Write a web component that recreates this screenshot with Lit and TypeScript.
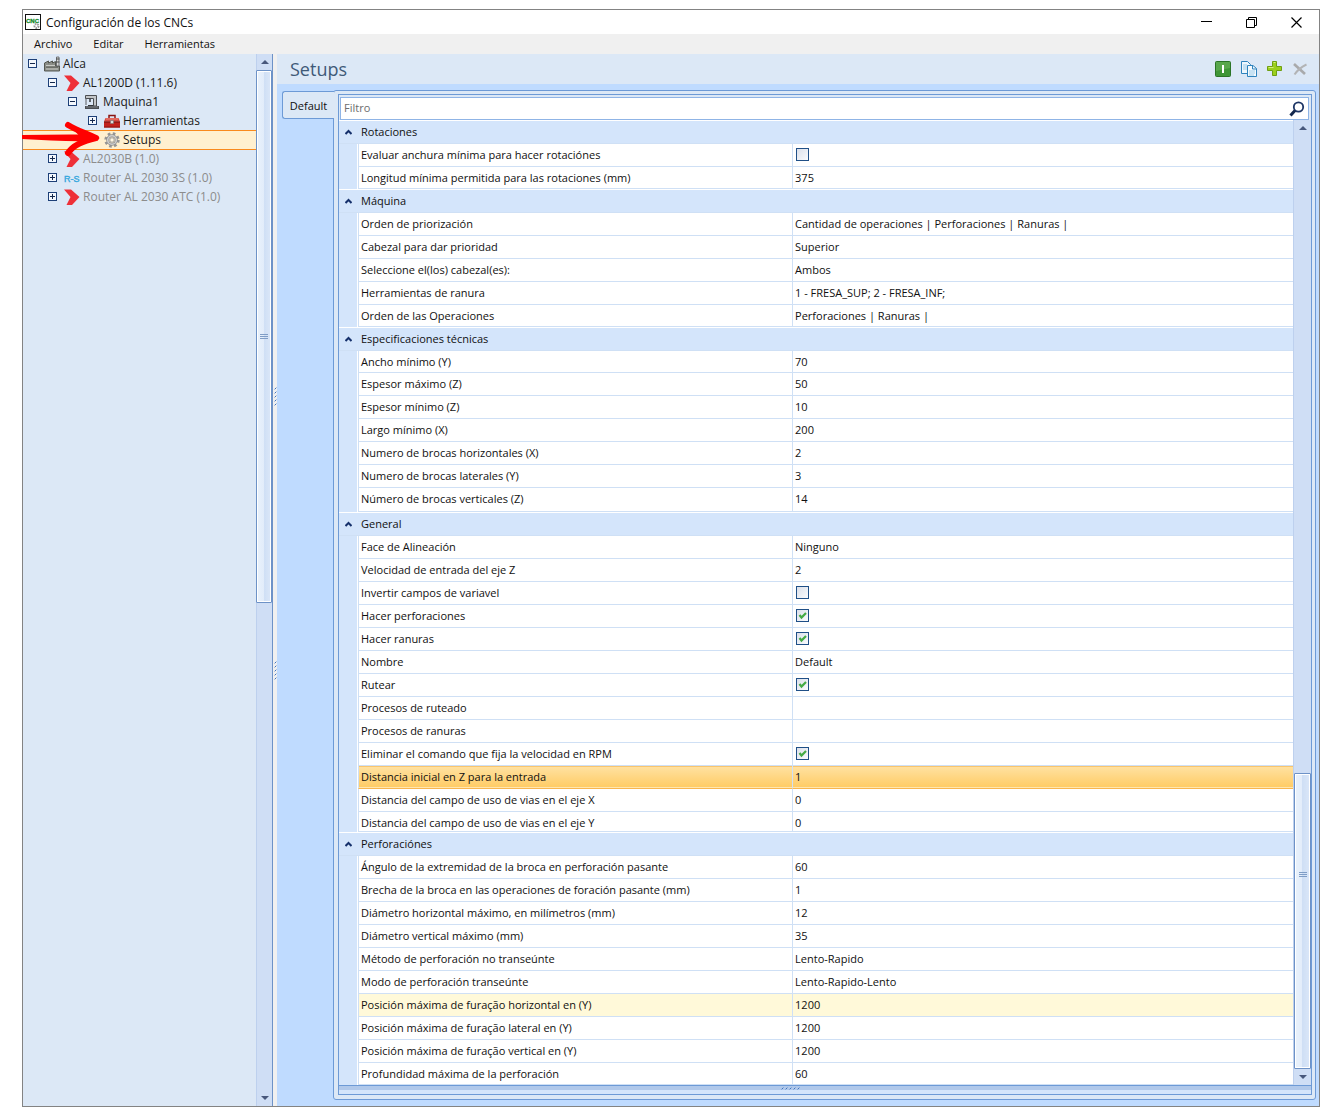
import { LitElement, html, css, svg, nothing } from "lit";
import { customElement, property } from "lit/decorators.js";
import { classMap } from "lit/directives/class-map.js";
import { styleMap } from "lit/directives/style-map.js";

type Row = { name: string; value?: string; check?: boolean; kind?: string };
type Group = { title: string; rows: Row[] };

const GROUPS: Group[] = [
  {
    title: "Rotaciones",
    rows: [
      { name: "Evaluar anchura mínima para hacer rotaciónes", check: false },
      { name: "Longitud mínima permitida para las rotaciones (mm)", value: "375", kind: "snug" },
    ],
  },
  {
    title: "Máquina",
    rows: [
      { name: "Orden de priorización", value: "Cantidad de operaciones | Perforaciones | Ranuras |" },
      { name: "Cabezal para dar prioridad", value: "Superior" },
      { name: "Seleccione el(los) cabezal(es):", value: "Ambos" },
      { name: "Herramientas de ranura", value: "1 - FRESA_SUP; 2 - FRESA_INF;" },
      { name: "Orden de las Operaciones", value: "Perforaciones | Ranuras |", kind: "snug" },
    ],
  },
  {
    title: "Especificaciones técnicas",
    rows: [
      { name: "Ancho mínimo (Y)", value: "70", kind: "snug" },
      { name: "Espesor máximo (Z)", value: "50" },
      { name: "Espesor mínimo (Z)", value: "10" },
      { name: "Largo mínimo (X)", value: "200" },
      { name: "Numero de brocas horizontales (X)", value: "2" },
      { name: "Numero de brocas laterales (Y)", value: "3" },
      { name: "Número de brocas verticales (Z)", value: "14", kind: "tall" },
    ],
  },
  {
    title: "General",
    rows: [
      { name: "Face de Alineación", value: "Ninguno" },
      { name: "Velocidad de entrada del eje Z", value: "2" },
      { name: "Invertir campos de variavel", check: false },
      { name: "Hacer perforaciones", check: true },
      { name: "Hacer ranuras", check: true },
      { name: "Nombre", value: "Default" },
      { name: "Rutear", check: true },
      { name: "Procesos de ruteado", value: "" },
      { name: "Procesos de ranuras", value: "" },
      { name: "Eliminar el comando que fija la velocidad en RPM", check: true },
      { name: "Distancia inicial en Z para la entrada", value: "1", kind: "active" },
      { name: "Distancia del campo de uso de vias en el eje X", value: "0" },
      { name: "Distancia del campo de uso de vias en el eje Y", value: "0", kind: "short" },
    ],
  },
  {
    title: "Perforaciónes",
    rows: [
      { name: "Ángulo de la extremidad de la broca en perforación pasante", value: "60" },
      { name: "Brecha de la broca en las operaciones de foración pasante (mm)", value: "1" },
      { name: "Diámetro horizontal máximo, en milímetros (mm)", value: "12" },
      { name: "Diámetro vertical máximo (mm)", value: "35" },
      { name: "Método de perforación no transeúnte", value: "Lento-Rapido" },
      { name: "Modo de perforación transeúnte", value: "Lento-Rapido-Lento" },
      { name: "Posición máxima de furação horizontal en (Y)", value: "1200", kind: "hover" },
      { name: "Posición máxima de furação lateral en (Y)", value: "1200" },
      { name: "Posición máxima de furação vertical en (Y)", value: "1200" },
      { name: "Profundidad máxima de la perforación", value: "60", kind: "snug" },
    ],
  },
];

type Node = { label: string; level: number; icon: string; open?: boolean; dim?: boolean; selected?: boolean };

const TREE: Node[] = [
  { label: "Alca", level: 0, icon: "factory", open: true },
  { label: "AL1200D (1.11.6)", level: 1, icon: "chevron", open: true },
  { label: "Maquina1", level: 2, icon: "machine", open: true },
  { label: "Herramientas", level: 3, icon: "toolbox", open: false },
  { label: "Setups", level: 3, icon: "gear", selected: true },
  { label: "AL2030B (1.0)", level: 1, icon: "chevron", open: false, dim: true },
  { label: "Router AL 2030 3S (1.0)", level: 1, icon: "rs", open: false, dim: true },
  { label: "Router AL 2030 ATC (1.0)", level: 1, icon: "chevron", open: false, dim: true },
];

const TREE_ICONS: Record<string, unknown> = {
  factory: svg`<path d="M.5 15V7l4-2v2l4-2v2l3-1.500V10H15.500v5z" fill="#8b8e88" stroke="#555852"/>
    <path d="M2 9.500h9M2 13h12" stroke="#c8cac5"/><path d="M2 11.200h12" stroke="#5f625c"/>
    <path d="M12.500 10V1h2.500v9z" fill="#d9dad7" stroke="#55585a" stroke-width=".8"/><path d="M12 3h3.500M12 6h3.500" stroke="#4a4d4c"/>`,
  chevron: svg`<path d="M0 .5H7L15.500 8 8 16H2.500L6.500 8z" fill="#ee3038"/>`,
  machine: svg`<path d="M1.500 1.500h11V12H9.500V4.500h-8z" fill="#c3c6c8" stroke="#4b4e52"/><path d="M2 4v7" stroke="#5a5d60" stroke-width="1"/>
    <path d="M6 4.500v3.500" stroke="#3a3d40" stroke-width="1.500"/><path d="M1 12h14v3H1z" fill="#4a4e53"/><path d="M4 11.500h5" stroke="#33373b"/><path d="M2 13h12" stroke="#9a9ea2" stroke-width=".7"/>`,
  toolbox: svg`<path d="M5 5V2.500h6V5" fill="none" stroke="#8a1512" stroke-width="1.500"/><path d="M1.500 5h13L16 8.500H0z" fill="#d94a40"/>
    <path d="M0 8.500h16v6H0z" fill="#c3221d"/><path d="M2 6h12" stroke="#eb8a7e"/><path d="M0 9h16" stroke="#74100d"/><path d="M0 14h16" stroke="#8e1512"/>
    <path d="M6.500 7.500h3v3h-3z" fill="#dedede" stroke="#777" stroke-width=".6"/>`,
  gear: svg`<circle cx="8" cy="8" r="6.400" fill="none" stroke="#959595" stroke-width="2.600" stroke-dasharray="2.600 2.427"/>
    <circle cx="8" cy="8" r="4.300" fill="none" stroke="#8d8d8d" stroke-width="3"/><circle cx="8" cy="8" r="4.300" fill="none" stroke="#cfcfcf" stroke-width="1.600"/>
    <circle cx="8" cy="8" r="2.200" fill="#fff6e2" stroke="#909090" stroke-width=".8"/>`,
  rs: svg`<text x="0" y="12" font-size="9" font-family="Liberation Sans, sans-serif" fill="#35a7dd" stroke="#35a7dd" stroke-width=".4">R-S</text>`,
};

const icon = (body: unknown) =>
  html`<svg width="16" height="16" viewBox="0 0 16 16" aria-hidden="true">${body}</svg>`;

@customElement("pane-scrollbar")
class PaneScrollbar extends LitElement {
  @property({ type: Number }) before = 0;
  @property({ type: Number }) thumb = 1;
  @property({ type: Number }) after = 0;
  @property({ type: Number }) grip = 50;

  static styles = css`
    :host { display: flex; flex-direction: column; width: 16px; flex: none; box-sizing: border-box;
      background: #cfdef5; border-left: 1px solid #bdd0ee; }
    :host([inset]) { width: 18px; }
    .arrow { height: 16px; flex: none; border: 0; padding: 0; background: none; display: grid; place-items: center; }
    .track { flex: 1; min-height: 0; display: flex; flex-direction: column; }
    .part { flex: 0 1 0px; min-height: 0; overflow: hidden; }
    .thumb { box-sizing: border-box; border: 1px solid #6d92c7; border-radius: 1px; margin-left: -1px;
      box-shadow: inset 0 0 0 1px #fff; display: flex; flex-direction: column; align-items: center;
      background: linear-gradient(90deg, #e9f2fc, #e2ecfa 50%, #cfdff5 50%, #dbe7f8); }
    :host([inset]) .thumb { margin-left: 0; }
    svg { display: block; flex: none; }
  `;

  render() {
    const grow = (n: number) => styleMap({ flexGrow: String(n) });
    return html`
      <button class="arrow" aria-label="Subir"><svg width="8" height="4"><path d="M0 4l4-4 4 4z" fill="#48587c"/></svg></button>
      <div class="track">
        <div class="part" style=${grow(this.before)}></div>
        <div class="part thumb" style=${grow(this.thumb)}>
          <div class="part" style=${grow(this.grip)}></div>
          <svg width="8" height="5"><path d="M0 .5h8M0 2.500h8M0 4.500h8" stroke="#7f9dc6"/></svg>
          <div class="part" style=${grow(100 - this.grip)}></div>
        </div>
        <div class="part" style=${grow(this.after)}></div>
      </div>
      <button class="arrow" aria-label="Bajar"><svg width="8" height="4"><path d="M0 0l4 4 4-4z" fill="#48587c"/></svg></button>
    `;
  }
}

@customElement("machine-tree")
class MachineTree extends LitElement {
  static styles = css`
    :host { display: block; flex: 1; min-width: 0; }
    .list { list-style: none; margin: 0; padding: 0; }
    .node { display: flex; align-items: center; height: 19px; box-sizing: border-box; padding-left: 5px;
      font-size: 12px; line-height: 16px; white-space: nowrap; color: #1b1b1b; }
    .level1 { padding-left: 25px; }
    .level2 { padding-left: 45px; }
    .level3 { padding-left: 65px; }
    .dim { color: #8c8c8c; }
    .selected { background: #fff0cf; border-top: 1px solid #f98a1c; border-bottom: 1px solid #f98a1c; height: 20px; margin-bottom: -1px; }
    .toggle { width: 9px; height: 9px; padding: 0; border: 0; background: none; flex: none; margin-right: 7px; }
    .space { width: 9px; flex: none; margin-right: 7px; }
    svg { display: block; flex: none; }
    .label { padding-left: 3px; }
  `;

  render() {
    return html`<ul class="list" role="tree">
      ${TREE.map((n) => html`
        <li role="treeitem" class=${classMap({ node: true, ["level" + n.level]: true, dim: !!n.dim, selected: !!n.selected })}>
          ${n.open === undefined
            ? html`<span class="space"></span>`
            : html`<button class="toggle" aria-label=${n.open ? "Contraer" : "Expandir"}>
                <svg width="9" height="9"><rect x=".5" y=".5" width="8" height="8" fill="#f4f8fd" stroke="#1d3f77"/>
                <path d=${n.open ? "M2 4.500h5" : "M2 4.500h5M4.500 2v5"} stroke="#14284d"/></svg>
              </button>`}
          ${icon(TREE_ICONS[n.icon])}
          <span class="label">${n.label}</span>
        </li>`)}
    </ul>`;
  }
}

@customElement("property-grid")
class PropertyGrid extends LitElement {
  static styles = css`
    :host { display: block; flex: 1; min-width: 0; background: #fff; }
    .grid { width: 100%; border-collapse: separate; border-spacing: 0; table-layout: fixed; font-size: 11px; line-height: 16px; color: #101010; }
    .gutter { width: 19px; }
    .names { width: 45.5%; }
    td, th { padding: 0; font-weight: normal; text-align: left; box-sizing: border-box; white-space: nowrap; overflow: hidden; vertical-align: top; }
    .group th { height: 24px; background: #d4e5fb; border-top: 1px solid #fff; border-bottom: 1px solid #cfe0f5; padding-top: 3px; }
    .row td, .row th { height: 23px; border-bottom: 1px solid #cfe0f5; padding-top: 3px; }
    .row .side { background: #d4e5fb; border-bottom: 0; border-right: 1px solid #fff; padding: 0; }
    .row .name { border-left: 1px solid #cfe0f5; padding-left: 2px; }
    .row .value { border-left: 1px solid #cfe0f5; padding-left: 2px; }
    .snug td, .snug th { height: 22px; }
    .short td, .short th { height: 20px; }
    .tall td, .tall th { height: 24px; }
    .hover .name, .hover .value { background: #fff9d9; }
    .active .name, .active .value { background: linear-gradient(#ffe2a3, #ffcb63); border-bottom-color: #f9b64f; box-shadow: inset 0 1px #f9c56d, inset 0 -1px #ffe6b0; }
    .group .title { padding-left: 3px; }
    .collapse { display: block; border: 0; padding: 0; background: none; margin: 5px 0 0 6px; }
    .collapse svg { display: block; }
    .box { appearance: none; display: block; width: 13px; height: 13px; margin: 1px 0 0 1px; box-sizing: border-box;
      border: 1px solid #1f4f87; background: linear-gradient(135deg, #dbe0ea, #fafbfd); }
    .box:checked { background: url("data:image/svg+xml,%3Csvg xmlns='http://www.w3.org/2000/svg' width='11' height='11'%3E%3Cpath d='M2.500 5l2 2.500L9 3' fill='none' stroke='%2344aa44' stroke-width='2.200'/%3E%3C/svg%3E"), linear-gradient(135deg, #dbe0ea, #fafbfd); }
  `;

  private row(r: Row, id: string) {
    const isCheck = r.check !== undefined;
    return html`<tr class="row ${r.kind ?? ""}">
      <td class="side"></td>
      <th class="name" scope="row">${isCheck ? html`<label for=${id}>${r.name}</label>` : r.name}</th>
      <td class="value">${isCheck ? html`<input class="box" type="checkbox" id=${id} ?checked=${r.check}>` : r.value || nothing}</td>
    </tr>`;
  }

  render() {
    return html`<table class="grid">
      <colgroup><col class="gutter"><col class="names"><col></colgroup>
      ${GROUPS.map((g, gi) => html`<tbody>
        <tr class="group">
          <th><button class="collapse" aria-label="Contraer grupo"><svg width="7" height="6"><path d="M.5 5L3.500 2l3 3" fill="none" stroke="#15306b" stroke-width="2"/></svg></button></th>
          <th class="title" colspan="2" scope="colgroup">${g.title}</th>
        </tr>
        ${g.rows.map((r, ri) => this.row(r, `p${gi}-${ri}`))}
      </tbody>`)}
    </table>`;
  }
}

@customElement("app-root")
class AppRoot extends LitElement {
  static styles = css`
    :host { display: block; background: #fff; font-family: "Open Sans", "Noto Sans", sans-serif; color: #101010; }
    * { box-sizing: border-box; }
    svg { display: block; }
    button { border: 0; padding: 0; background: none; display: grid; place-items: center; }
    .page { min-height: 100vh; padding: 9px 1px 4px 22px; display: flex; }
    .window { position: relative; flex: 1; min-width: 0; display: flex; flex-direction: column; border: 1px solid #838383; }
    .titlebar { height: 24px; display: flex; align-items: center; padding-left: 2px; background: #fff; }
    .caption { margin: 0; padding: 1px 0 0 5px; font-size: 12px; font-weight: normal; line-height: 17px; flex: 1; }
    .winbtn { width: 45px; height: 24px; }
    .menu { height: 20px; display: flex; align-items: center; gap: 21px; padding-left: 11px; background: #f0f0f0; }
    .menu button { font: inherit; font-size: 11px; line-height: 16px; color: inherit; }
    .body { flex: 1; display: flex; min-height: 0; }
    .side { width: 250px; flex: none; display: flex; background: #dce8f6; border-right: 1px solid #6d92c7; }
    .splitter { width: 4px; flex: none; background: #f0f0f0; display: flex; flex-direction: column; align-items: flex-end; }
    .main { flex: 1; min-width: 0; display: flex; flex-direction: column; background: #bfdbff; }
    .head { height: 30px; display: flex; align-items: center; background: #dce8f6; padding: 0 10px 0 13px; gap: 10px; }
    .heading { margin: 0; flex: 1; font-size: 18px; font-weight: normal; line-height: 24px; color: #3f5a78; }
    .tabs { flex: 1; display: flex; padding: 6px 3px 6px 5px; }
    .tab { position: relative; z-index: 1; width: 52px; height: 28px; margin: 1px -1px 0 0; flex: none; font: inherit; font-size: 11px; color: inherit;
      background: #dce8f6; border: 1px solid #6d9ad6; border-right: 0; border-radius: 3px 0 0 3px; }
    .panel { flex: 1; min-width: 0; display: flex; border: 1px solid #6d9ad6; border-radius: 3px; background: #dce8f6; padding: 3px 3px 4px 4px; }
    .frame { flex: 1; min-width: 0; display: flex; flex-direction: column; border: 1px solid #6d9ad6; background: #dce8f6; }
    .filter { height: 23px; margin: 2px 2px 0 1px; display: flex; align-items: center; border: 1px solid #8fb4e6; background: #fff; padding-right: 3px; flex: none; }
    .filter input { flex: 1; min-width: 0; border: 0; outline: 0; padding: 0 3px 2px; background: none; font: inherit; font-size: 11px; }
    .filter input::placeholder { color: #6d6d6d; }
    .sheet { flex: 1; display: flex; }
    .status { height: 9px; flex: none; border-top: 1px solid #6d9ad6; background: linear-gradient(#b0c8ea 4px, #d4e5fb 4px); padding-left: 45.5%; }
    .pointer { position: absolute; left: -1px; top: 110px; pointer-events: none; }
  `;

  private grip() {
    return html`<svg width="3" height="20"><path d="M2 1l-1 1M2 5l-1 1M2 9l-1 1M2 13l-1 1M2 17l-1 1" stroke="#3f74c0" stroke-linecap="square"/></svg>`;
  }

  render() {
    return html`<div class="page"><div class="window">
      <header class="titlebar">
        <svg width="16" height="16"><rect x=".5" y=".5" width="15" height="15" fill="#fff" stroke="#111"/>
          <text x="1" y="9" font-family="Liberation Sans, sans-serif" font-weight="bold" font-size="6" fill="#158a2a" stroke="#158a2a" stroke-width=".3">CNC</text>
          <circle cx="11.500" cy="12" r="2" fill="none" stroke="#999" stroke-width="2" stroke-dasharray="1.500 .8"/></svg>
        <h1 class="caption">Configuración de los CNCs</h1>
        <button class="winbtn" aria-label="Minimizar"><svg width="11" height="11"><path d="M0 4.500h11" stroke="#000"/></svg></button>
        <button class="winbtn" aria-label="Restaurar"><svg width="11" height="11"><path d="M.5 2.500h8v8h-8zM2.500 2V.5h8v8H9" fill="none" stroke="#000"/></svg></button>
        <button class="winbtn" aria-label="Cerrar"><svg width="11" height="11"><path d="M.5 .5l10 10M10.500 .5l-10 10" stroke="#000" stroke-width="1.200"/></svg></button>
      </header>
      <nav class="menu"><button>Archivo</button><button>Editar</button><button>Herramientas</button></nav>
      <div class="body">
        <aside class="side">
          <machine-tree></machine-tree>
          <pane-scrollbar .before=${0} .thumb=${532} .after=${487}></pane-scrollbar>
        </aside>
        <div class="splitter">
          <div style=${styleMap({ flexGrow: "333" })}></div>${this.grip()}
          <div style=${styleMap({ flexGrow: "255" })}></div>${this.grip()}
          <div style=${styleMap({ flexGrow: "425" })}></div>
        </div>
        <main class="main">
          <div class="head">
            <h2 class="heading">Setups</h2>
            <button aria-label="Activar">${icon(svg`<rect x=".5" y=".5" width="15" height="15" rx="1" fill="#3f9636" stroke="#2b7426"/><path d="M1 1h14v6L1 10z" fill="#6bb35c" opacity=".6"/><path d="M7 4h2v8H7z" fill="#fff"/>`)}</button>
            <button aria-label="Copiar">${icon(svg`<path d="M.5 .5h6l3 3v9h-9z" fill="#eef7fd" stroke="#2f83bd"/><path d="M2 4h4M2 6h4M2 8h4" stroke="#9ccbe8"/>
              <path d="M6.500 4.500h5.500l3.500 3v8h-9z" fill="#f4fafe" stroke="#2f83bd"/><path d="M11.500 4.500v3.500h4" fill="none" stroke="#2f83bd"/><path d="M8 10h6M8 12h6M8 14h5" stroke="#9ccbe8"/>`)}</button>
            <button aria-label="Agregar">${icon(svg`<path d="M5.500 .5h4v5h5v4h-5v5h-4v-5h-5v-4h5z" fill="#9bd01c" stroke="#6f9f12"/><path d="M6.500 1.500h2M1.500 6.500h5" stroke="#d5ef80"/>`)}</button>
            <button aria-label="Eliminar">${icon(svg`<path d="M1 3l11 10" stroke="#a9aaab" stroke-width="2.600"/><path d="M13.500 3.500C8 6 4 10 1.500 13.500" stroke="#b3b4b5" stroke-width="2" fill="none"/>`)}</button>
          </div>
          <div class="tabs">
            <button class="tab" role="tab" aria-selected="true">Default</button>
            <section class="panel"><div class="frame">
              <div class="filter">
                <input type="text" placeholder="Filtro" aria-label="Filtro">
                <button aria-label="Buscar">${icon(svg`<circle cx="9.500" cy="6" r="4.700" fill="#fff" stroke="#1d3565" stroke-width="1.800"/><path d="M6 9.500L1.500 14.500" stroke="#14284d" stroke-width="3"/>`)}</button>
              </div>
              <div class="sheet">
                <property-grid></property-grid>
                <pane-scrollbar inset .before=${638} .thumb=${295} .after=${0} .grip=${34}></pane-scrollbar>
              </div>
              <div class="status"><svg width="20" height="4"><path d="M1 3l1-1M5 3l1-1M9 3l1-1M13 3l1-1M17 3l1-1" stroke="#3f74c0" stroke-linecap="square"/></svg></div>
            </div></section>
          </div>
        </main>
      </div>
      <svg class="pointer" width="84" height="40" aria-hidden="true">
        <path d="M0 15C24 15 48 14 72 15l4 3-4 3C48 22 24 20 0 19z" fill="#f00"/>
        <path d="M46 5C54 10 63 13 74 18M46 33C50 27 60 21 74 18" fill="none" stroke="#f00" stroke-width="6" stroke-linecap="round"/>
        <path d="M52 10L78 18 54 27l5-9z" fill="#f00"/>
      </svg>
    </div></div>`;
  }
}
